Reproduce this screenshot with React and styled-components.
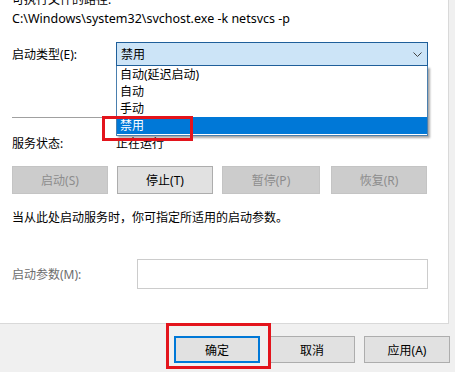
import styled, { createGlobalStyle } from 'styled-components';

const GlobalStyle = createGlobalStyle`
  html, body {
    margin: 0;
    padding: 0;
    background: #f0f0f0;
    overflow: hidden;
  }
  * { box-sizing: border-box; }
`;

const FONT = `"Noto Sans", "Noto Sans CJK SC", sans-serif`;

const items = ['自动(延迟启动)', '自动', '手动', '禁用'];

export default function App() {
  return (
    <Window>
      <GlobalStyle />
      <Panel>
        <CutLine>可执行文件的路径:</CutLine>
        <PathLine>C:\Windows\system32\svchost.exe -k netsvcs -p</PathLine>

        <TypeRow>
          <Label>启动类型(E):</Label>
          <ComboWrap>
            <Combo>
              <span>禁用</span>
              <svg width="9" height="5" viewBox="0 0 9 5">
                <polyline points="0.5,0.5 4.5,4.5 8.5,0.5" fill="none" stroke="#444" strokeWidth="1" />
              </svg>
            </Combo>
            <DropList>
              {items.map((it) => (
                <DropItem key={it} $selected={it === '禁用'}>{it}</DropItem>
              ))}
            </DropList>
          </ComboWrap>
        </TypeRow>

        <Separator />

        <StatusRow>
          <Label>服务状态:</Label>
          <span>正在运行</span>
        </StatusRow>

        <ButtonRow>
          <ActionButton disabled>启动(S)</ActionButton>
          <ActionButton>停止(T)</ActionButton>
          <ActionButton disabled $wide>暂停(P)</ActionButton>
          <ActionButton disabled>恢复(R)</ActionButton>
        </ButtonRow>

        <InfoText>当从此处启动服务时，你可指定所适用的启动参数。</InfoText>

        <ParamRow>
          <Label $muted>启动参数(M):</Label>
          <ParamInput disabled />
        </ParamRow>
      </Panel>

      <Footer>
        <DialogButton $default>确定</DialogButton>
        <DialogButton>取消</DialogButton>
        <DialogButton>应用(A)</DialogButton>
      </Footer>

      <Highlight style={{ left: 102, top: 116, width: 91, height: 25 }} />
      <Highlight style={{ left: 166, top: 323, width: 105, height: 46 }} />
    </Window>
  );
}

const Window = styled.div`
  position: relative;
  width: 455px;
  height: 372px;
  overflow: hidden;
  font-family: ${FONT};
  font-size: 12px;
  color: #000;
`;

const Panel = styled.div`
  width: 449px;
  height: 324px;
  background: #fff;
  border-right: 1px solid #d9d9d9;
  border-bottom: 1px solid #d9d9d9;
  padding-left: 12px;
  display: flex;
  flex-direction: column;
`;

const CutLine = styled.div`
  margin-top: -8px;
  line-height: 16px;
  height: 16px;
`;

const PathLine = styled.div`
  line-height: 22px;
  height: 22px;
  font-size: 12.5px;
`;

const TypeRow = styled.div`
  margin-top: 12px;
  height: 24px;
  display: flex;
  align-items: center;
`;

const Label = styled.div`
  width: 104px;
  flex-shrink: 0;
  color: ${(p) => (p.$muted ? '#6d6d6d' : '#000')};
`;

const ComboWrap = styled.div`
  position: relative;
  width: 312px;
  height: 24px;
  z-index: 2;
`;

const Combo = styled.div`
  height: 24px;
  border: 1px solid #1f5f9a;
  background: #cce4f7;
  display: flex;
  align-items: center;
  justify-content: space-between;
  padding: 0 5px 0 4px;
`;

const DropList = styled.div`
  position: absolute;
  left: 0;
  right: 0;
  top: 24px;
  background: #fff;
  border: 1px solid #4a7fae;
  border-top: none;
  padding-bottom: 1px;
  box-shadow: 2px 2px 2px rgba(0, 0, 0, 0.35);
`;

const DropItem = styled.div`
  height: 17px;
  line-height: 17px;
  padding-left: 3px;
  background: ${(p) => (p.$selected ? '#0078d7' : '#fff')};
  color: ${(p) => (p.$selected ? '#fff' : '#000')};
`;

const Separator = styled.div`
  margin-top: 51px;
  width: 416px;
  height: 1px;
  background: #a0a0a0;
`;

const StatusRow = styled.div`
  margin-top: 16px;
  height: 18px;
  display: flex;
  align-items: center;
`;

const ButtonRow = styled.div`
  margin-top: 14px;
  width: 416px;
  display: grid;
  grid-template-columns: 96px 96px 98px 96px;
  column-gap: 9px;
  & > :last-child { margin-left: 2px; }
`;

const ActionButton = styled.button`
  width: ${(p) => (p.$wide ? 98 : 96)}px;
  height: 28px;
  font-family: ${FONT};
  font-size: 12px;
  padding: 0;
  background: ${(p) => (p.disabled ? '#cccccc' : '#e1e1e1')};
  border: 1px solid ${(p) => (p.disabled ? '#c4c4c4' : '#adadad')};
  color: ${(p) => (p.disabled ? '#8c8c8c' : '#000')};
`;

const InfoText = styled.div`
  margin-top: 15px;
  height: 18px;
  line-height: 18px;
`;

const ParamRow = styled.div`
  margin-top: 32px;
  height: 30px;
  display: flex;
  align-items: center;
`;

const ParamInput = styled.input`
  margin-left: 21px;
  width: 291px;
  height: 30px;
  border: 1px solid #cccccc;
  background: #fff;
  outline: none;
`;

const Footer = styled.div`
  display: flex;
  justify-content: flex-end;
  gap: 9px;
  padding: 12px 5px 0 0;
`;

const DialogButton = styled.button`
  width: 86px;
  height: 27px;
  font-family: ${FONT};
  font-size: 12px;
  padding: 0;
  background: #e1e1e1;
  color: #000;
  border: ${(p) => (p.$default ? '2px solid #0078d7' : '1px solid #adadad')};
`;

const Highlight = styled.div`
  position: absolute;
  border: 3px solid #e3141c;
  pointer-events: none;
  z-index: 5;
`;
